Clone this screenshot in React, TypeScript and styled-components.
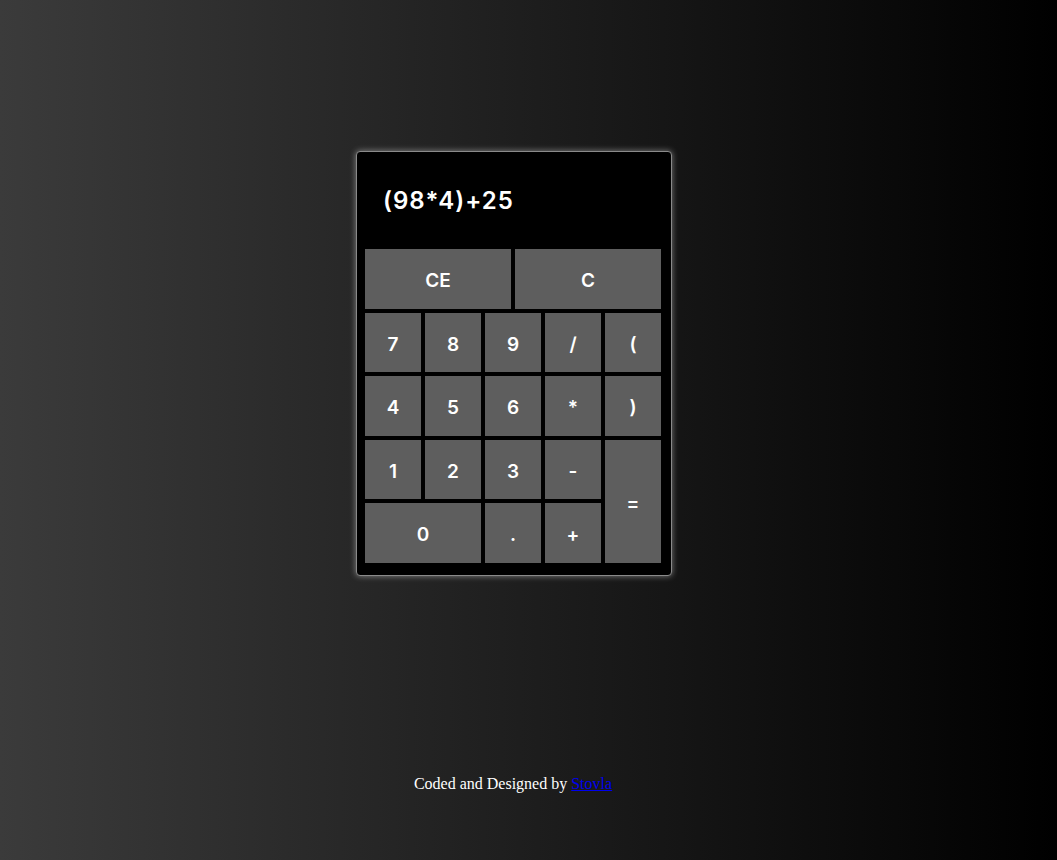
import styled, { createGlobalStyle } from "styled-components";

const GlobalStyle = createGlobalStyle`
  html, body {
    margin: 0;
    padding: 0;
    height: 100%;
  }
  body {
    background: linear-gradient(to right, #3b3b3b, #000000);
    min-height: 860px;
  }
`;

const Page = styled.div`
  min-height: 860px;
  display: flex;
  flex-direction: column;
  align-items: center;
  padding-right: 29px;
  box-sizing: border-box;
`;

const Calculator = styled.div`
  margin-top: 151px;
  width: 316px;
  box-sizing: border-box;
  background: #000;
  border: 1px solid #8a8a8a;
  border-radius: 4px;
  box-shadow: 0 0 6px rgba(255, 255, 255, 0.45);
  padding: 0 9px 12px 8px;
`;

const Display = styled.div`
  height: 97px;
  box-sizing: border-box;
  padding: 34px 0 0 18px;
  color: #fff;
  font-family: Inter, "Noto Sans", sans-serif;
  font-size: 24px;
  font-weight: 600;
  letter-spacing: 1px;
`;

const Keys = styled.div`
  display: grid;
  grid-template-columns: repeat(10, 26px);
  grid-auto-rows: 59.5px;
  gap: 4px;
`;

const Key = styled.button<{ $cols: number; $rows?: number }>`
  grid-column: span ${(p) => p.$cols};
  grid-row: span ${(p) => p.$rows ?? 1};
  border: none;
  margin: 0;
  padding: 4px 0 0;
  background: #5e5e5e;
  color: #fff;
  font-family: Inter, "Noto Sans", sans-serif;
  font-size: 19px;
  font-weight: 600;
  cursor: pointer;
`;

const Footer = styled.p`
  margin: 199px 2px 0 0;
  color: #fff;
  font-family: "Liberation Serif", "Times New Roman", serif;
  font-size: 16px;

  a {
    color: #0000ee;
  }
`;

type KeyDef = { label: string; cols: number; rows?: number };

const keys: KeyDef[] = [
  { label: "CE", cols: 5 },
  { label: "C", cols: 5 },
  { label: "7", cols: 2 },
  { label: "8", cols: 2 },
  { label: "9", cols: 2 },
  { label: "/", cols: 2 },
  { label: "(", cols: 2 },
  { label: "4", cols: 2 },
  { label: "5", cols: 2 },
  { label: "6", cols: 2 },
  { label: "*", cols: 2 },
  { label: ")", cols: 2 },
  { label: "1", cols: 2 },
  { label: "2", cols: 2 },
  { label: "3", cols: 2 },
  { label: "-", cols: 2 },
  { label: "=", cols: 2, rows: 2 },
  { label: "0", cols: 4 },
  { label: ".", cols: 2 },
  { label: "+", cols: 2 },
];

function App() {
  return (
    <>
      <GlobalStyle />
      <Page>
        <Calculator>
          <Display>(98*4)+25</Display>
          <Keys>
            {keys.map((k) => (
              <Key key={k.label} $cols={k.cols} $rows={k.rows}>
                {k.label}
              </Key>
            ))}
          </Keys>
        </Calculator>
        <Footer>
          Coded and Designed by <a href="#">Stovla</a>
        </Footer>
      </Page>
    </>
  );
}

export default App;
